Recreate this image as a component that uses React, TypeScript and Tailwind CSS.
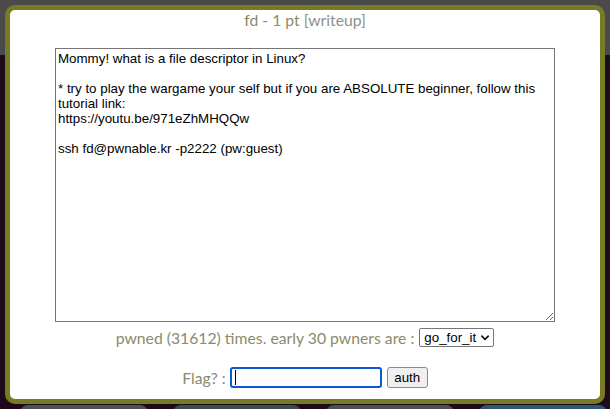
import React from 'react';

const description = `Mommy! what is a file descriptor in Linux?

* try to play the wargame your self but if you are ABSOLUTE beginner, follow this
tutorial link:
https://youtu.be/971eZhMHQQw

ssh fd@pwnable.kr -p2222 (pw:guest)`;

const ChevronDown = () => (
  <svg width="9" height="6" viewBox="0 0 9 6" className="ml-[5px]">
    <path d="M1 1l3.5 3.5L8 1" fill="none" stroke="#111" strokeWidth="1.8" strokeLinecap="round" strokeLinejoin="round" />
  </svg>
);

export default function App() {
  return (
    <div className="relative w-[610px] h-[409px] overflow-hidden bg-[#1e0a1a]">
      {/* page behind the dialog */}
      <div className="h-[55px] bg-[#4a4a4a]"></div>
      <div className="flex gap-[25px] pl-[20px] pt-[350px]">
        <div className="w-[128px] h-[40px] rounded-t-[8px] bg-[#4f5050]"></div>
        <div className="w-[128px] h-[40px] rounded-t-[8px] bg-[#3e4a4c]"></div>
        <div className="w-[128px] h-[40px] rounded-t-[8px] bg-[#4d4e4e]"></div>
        <div className="w-[128px] h-[40px] rounded-t-[8px] bg-[#2f5672]"></div>
      </div>

      {/* challenge dialog */}
      <div className="absolute left-[5px] top-[5px] w-[600px] h-[399px] rounded-[10px] border-[5px] border-[#767b26] bg-white font-['Lato','Open_Sans',sans-serif]">
        <div className="flex flex-col items-center">
          <h1 className="mt-0 text-[15.75px] leading-[19px] font-normal text-[#8a8b6b]">
            fd - 1 pt <span className="text-[#8f8f8f]">[writeup]</span>
          </h1>

          <textarea
            readOnly
            defaultValue={description}
            className="mt-[19px] w-[500px] h-[274px] border border-[#767676] px-[2px] py-[2px] font-['Liberation_Sans',Arial,sans-serif] text-[13.33px] leading-[15px] text-black outline-none resize"
          />

          <div className="mt-[6px] flex items-center text-[15.75px] leading-[19px] text-[#8a8b6b]">
            <span>pwned (31612) times. early 30 pwners are :</span>
            <span className="ml-[5px] flex items-center h-[19px] w-[75px] px-[4px] border border-[#767676] rounded-[2px] bg-white font-['Liberation_Sans',Arial,sans-serif] text-[13.33px] text-black">
              go_for_it
              <ChevronDown />
            </span>
          </div>

          <div className="mt-[20px] flex items-center text-[15.75px] leading-[19px] text-[#8a8b6b]">
            <span>Flag? :</span>
            <span className="ml-[4px] flex items-center h-[21px] w-[152px] px-[3px] border-2 border-[#0a5ad6] rounded-[3px] bg-white">
              <span className="w-px h-[15px] bg-black"></span>
            </span>
            <button className="ml-[5px] h-[21px] w-[41px] border border-[#8a8a8a] rounded-[3px] bg-[#efefef] font-['Liberation_Sans',Arial,sans-serif] text-[13.33px] leading-[19px] text-black">
              auth
            </button>
          </div>
        </div>
      </div>
    </div>
  );
}
